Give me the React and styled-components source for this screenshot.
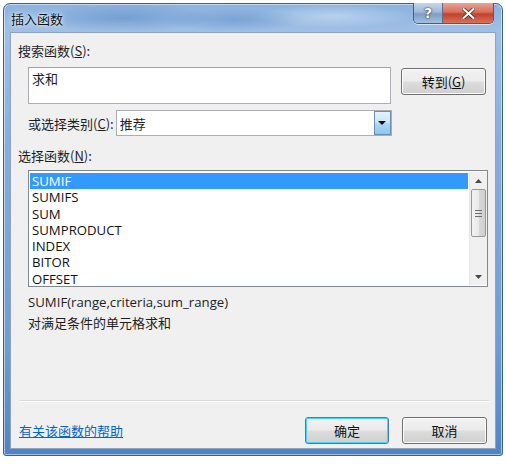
import React from 'react'
import styled, { createGlobalStyle } from 'styled-components'

const GlobalStyle = createGlobalStyle`
  html, body {
    margin: 0;
    padding: 0;
    background: #ffffff;
  }
  body {
    font-family: "Open Sans", "Noto Sans CJK SC", sans-serif;
    font-size: 13px;
    color: #1e1e1e;
  }
`

const Page = styled.div`
  padding: 3px 3px 0 3px;
  width: 500px;
`

const Window = styled.div`
  height: 453px;
  box-sizing: border-box;
  border: 1px solid #3e5f88;
  border-radius: 7px 7px 3px 3px;
  padding: 0 6px 6px 6px;
  display: flex;
  flex-direction: column;
  background:
    radial-gradient(ellipse 90px 14px at 120px 14px, rgba(60,110,180,0.35), rgba(60,110,180,0)),
    radial-gradient(ellipse 70px 12px at 230px 16px, rgba(60,110,180,0.3), rgba(60,110,180,0)),
    radial-gradient(ellipse 80px 12px at 330px 12px, rgba(255,255,255,0.35), rgba(255,255,255,0)),
    linear-gradient(180deg, #8bb2de 0%, #9fc0e6 6%, #86aedd 30%, #6f9dd3 75%, #4f84c4 100%);
  box-shadow: inset 0 0 0 1px rgba(255,255,255,0.5);
`

const TitleBar = styled.div`
  height: 28px;
  display: flex;
  align-items: flex-start;
  justify-content: space-between;
`

const Title = styled.span`
  margin: 5px 0 0 1px;
  font-family: "Noto Sans CJK SC", sans-serif;
  font-size: 13px;
  color: #111;
  text-shadow: 0 0 6px rgba(255,255,255,0.9), 0 0 3px rgba(255,255,255,0.8);
`

const Caption = styled.div`
  display: flex;
  margin: -1px 2px 0 0;
  border: 1px solid #3f5f86;
  border-top: none;
  border-radius: 0 0 5px 5px;
  overflow: hidden;
  box-shadow: 0 1px 0 rgba(255,255,255,0.6);
`

const CapButton = styled.div`
  width: ${p => p.$w}px;
  height: 20px;
  display: flex;
  align-items: center;
  justify-content: center;
  background: ${p => p.$close
    ? 'linear-gradient(180deg, #e8a493 0%, #d7705c 45%, #c4412a 55%, #d5735b 100%)'
    : 'linear-gradient(180deg, #c4d6ec 0%, #9fb8d8 45%, #7f9dc4 55%, #a6bfdd 100%)'};
  & + & {
    border-left: 1px solid #5a6f8c;
  }
  span {
    font-family: "DejaVu Sans", sans-serif;
    font-weight: bold;
    color: #fff;
    font-size: 14px;
    text-shadow: 0 0 2px #333, 0 0 1px #000;
  }
`

const Content = styled.div`
  flex: 1;
  background: #f0f0f0;
  border: 1px solid #8ea4c0;
  padding: 0 9px 0 7px;
  display: flex;
  flex-direction: column;
  font-family: "Noto Sans CJK SC", sans-serif;
`

const Label = styled.div`
  height: 16px;
  line-height: 16px;
  margin-top: ${p => p.$top}px;
  font-size: 13px;
  u { text-decoration: underline; }
`

const SearchRow = styled.div`
  display: flex;
  align-items: flex-start;
  gap: 10px;
  margin: 8px 0 0 10px;
`

const SearchBox = styled.div`
  width: 364px;
  height: 37px;
  box-sizing: border-box;
  background: #fff;
  border: 1px solid #abadb3;
  border-top-color: #a0a5ad;
  padding: 3px 3px;
  line-height: 16px;
`

const Button = styled.div`
  width: ${p => p.$w}px;
  height: 27px;
  box-sizing: border-box;
  margin-top: ${p => p.$top || 0}px;
  border: 1px solid ${p => p.$default ? '#3c7fb1' : '#707070'};
  border-radius: 3px;
  background: linear-gradient(180deg, #f2f2f2 0%, #ebebeb 48%, #dddddd 52%, #cfcfcf 100%);
  box-shadow: inset 0 0 0 1px ${p => p.$default ? '#48d5fd' : '#fbfbfb'};
  display: flex;
  align-items: center;
  justify-content: center;
  font-size: 13px;
  color: #111;
  u { text-decoration: underline; }
`

const CategoryRow = styled.div`
  display: flex;
  align-items: center;
  margin: 6px 0 0 10px;
`

const Select = styled.div`
  width: 276px;
  height: 26px;
  margin-left: 2px;
  box-sizing: border-box;
  background: #fff;
  border: 1px solid #abadb3;
  display: flex;
  align-items: center;
  padding-left: 3px;
`

const SelectValue = styled.span`
  flex: 1;
`

const Arrow = styled.div`
  width: 17px;
  height: 24px;
  box-sizing: border-box;
  border: 1px solid #6c8fb1;
  background: linear-gradient(180deg, #e4f2fb 0%, #cbe7f7 45%, #a8d7f4 55%, #8cc8ee 100%);
  display: flex;
  align-items: center;
  justify-content: center;
`

const ListBox = styled.div`
  width: 460px;
  height: 117px;
  box-sizing: border-box;
  margin: 6px 0 0 10px;
  background: #fff;
  border: 1px solid #828790;
  display: flex;
  padding: 1px 0 1px 1px;
`

const Items = styled.div`
  flex: 1;
  padding-top: 1px;
`

const Item = styled.div`
  height: 16.3px;
  line-height: 16px;
  padding-left: 2px;
  margin-right: 1px;
  font-family: "Open Sans", sans-serif;
  font-size: 13.2px;
  color: ${p => p.$sel ? '#fff' : '#111'};
  background: ${p => p.$sel ? '#3399ff' : 'transparent'};
`

const ScrollBar = styled.div`
  width: 17px;
  display: flex;
  flex-direction: column;
  align-items: center;
  background: #f0f0f0;
  border-left: 1px solid #e6e6e6;
`

const ScrollArrow = styled.div`
  height: 17px;
  display: flex;
  align-items: center;
  justify-content: center;
`

const Thumb = styled.div`
  width: 15px;
  height: 48px;
  box-sizing: border-box;
  border: 1px solid #979797;
  border-radius: 2px;
  background: linear-gradient(90deg, #f3f3f3 0%, #e8e8e8 50%, #d8d8d8 51%, #d0d0d0 100%);
  display: flex;
  flex-direction: column;
  align-items: center;
  justify-content: center;
  gap: 2px;
  i {
    display: block;
    width: 7px;
    height: 1px;
    background: #6e6e6e;
  }
`

const Track = styled.div`
  flex: 1;
`

const Signature = styled.div`
  margin: 6px 0 0 10px;
  font-family: "Open Sans", sans-serif;
  font-size: 13.2px;
  line-height: 18px;
`

const Description = styled.div`
  margin: 3px 0 0 10px;
  font-size: 13px;
  line-height: 18px;
`

const Separator = styled.div`
  margin: auto 0 0 1px;
  width: 470px;
  height: 1px;
  background: #dcdcdc;
  border-bottom: 1px solid #ffffff;
`

const Footer = styled.div`
  display: flex;
  align-items: center;
  margin: 14px 0 0 1px;
  height: 28px;
  padding-bottom: 4px;
`

const HelpLink = styled.a`
  color: #0066cc;
  text-decoration: underline;
  font-size: 13px;
  margin-right: auto;
  cursor: pointer;
`

const Buttons = styled.div`
  display: flex;
  gap: 13px;
  margin-right: -1px;
`

function Up({ down }) {
  return (
    <svg width="7" height="4" viewBox="0 0 7 4" style={{ transform: down ? 'rotate(180deg)' : 'none' }}>
      <path d="M0 4 L3.5 0 L7 4 Z" fill="#4a4a4a" />
    </svg>
  )
}

const functions = ['SUMIF', 'SUMIFS', 'SUM', 'SUMPRODUCT', 'INDEX', 'BITOR', 'OFFSET']

export default function App() {
  return (
    <Page>
      <GlobalStyle />
      <Window>
        <TitleBar>
          <Title>插入函数</Title>
          <Caption>
            <CapButton $w={28}><span>?</span></CapButton>
            <CapButton $w={50} $close>
              <svg width="13" height="11" viewBox="0 0 13 11">
                <path d="M1.5 1 L11.5 10 M11.5 1 L1.5 10" stroke="#3a2a2a" strokeWidth="3.6" strokeLinecap="round" />
                <path d="M1.5 1 L11.5 10 M11.5 1 L1.5 10" stroke="#ffffff" strokeWidth="2.2" strokeLinecap="round" />
              </svg>
            </CapButton>
          </Caption>
        </TitleBar>
        <Content>
          <Label $top={10}>搜索函数(<u>S</u>):</Label>
          <SearchRow>
            <SearchBox>求和</SearchBox>
            <Button $w={85} $top={1}>转到(<u>G</u>)</Button>
          </SearchRow>
          <CategoryRow>
            <span>或选择类别(<u>C</u>):</span>
            <Select>
              <SelectValue>推荐</SelectValue>
              <Arrow>
                <svg width="8" height="4" viewBox="0 0 8 4"><path d="M0 0 H8 L4 4 Z" fill="#111" /></svg>
              </Arrow>
            </Select>
          </CategoryRow>
          <Label $top={12}>选择函数(<u>N</u>):</Label>
          <ListBox>
            <Items>
              {functions.map((f, i) => (
                <Item key={f} $sel={i === 0}>{f}</Item>
              ))}
            </Items>
            <ScrollBar>
              <ScrollArrow><Up /></ScrollArrow>
              <Thumb><i /><i /><i /></Thumb>
              <Track />
              <ScrollArrow><Up down /></ScrollArrow>
            </ScrollBar>
          </ListBox>
          <Signature>SUMIF(range,criteria,sum_range)</Signature>
          <Description>对满足条件的单元格求和</Description>
          <Separator />
          <Footer>
            <HelpLink>有关该函数的帮助</HelpLink>
            <Buttons>
              <Button $w={84} $default>确定</Button>
              <Button $w={85}>取消</Button>
            </Buttons>
          </Footer>
        </Content>
      </Window>
    </Page>
  )
}
